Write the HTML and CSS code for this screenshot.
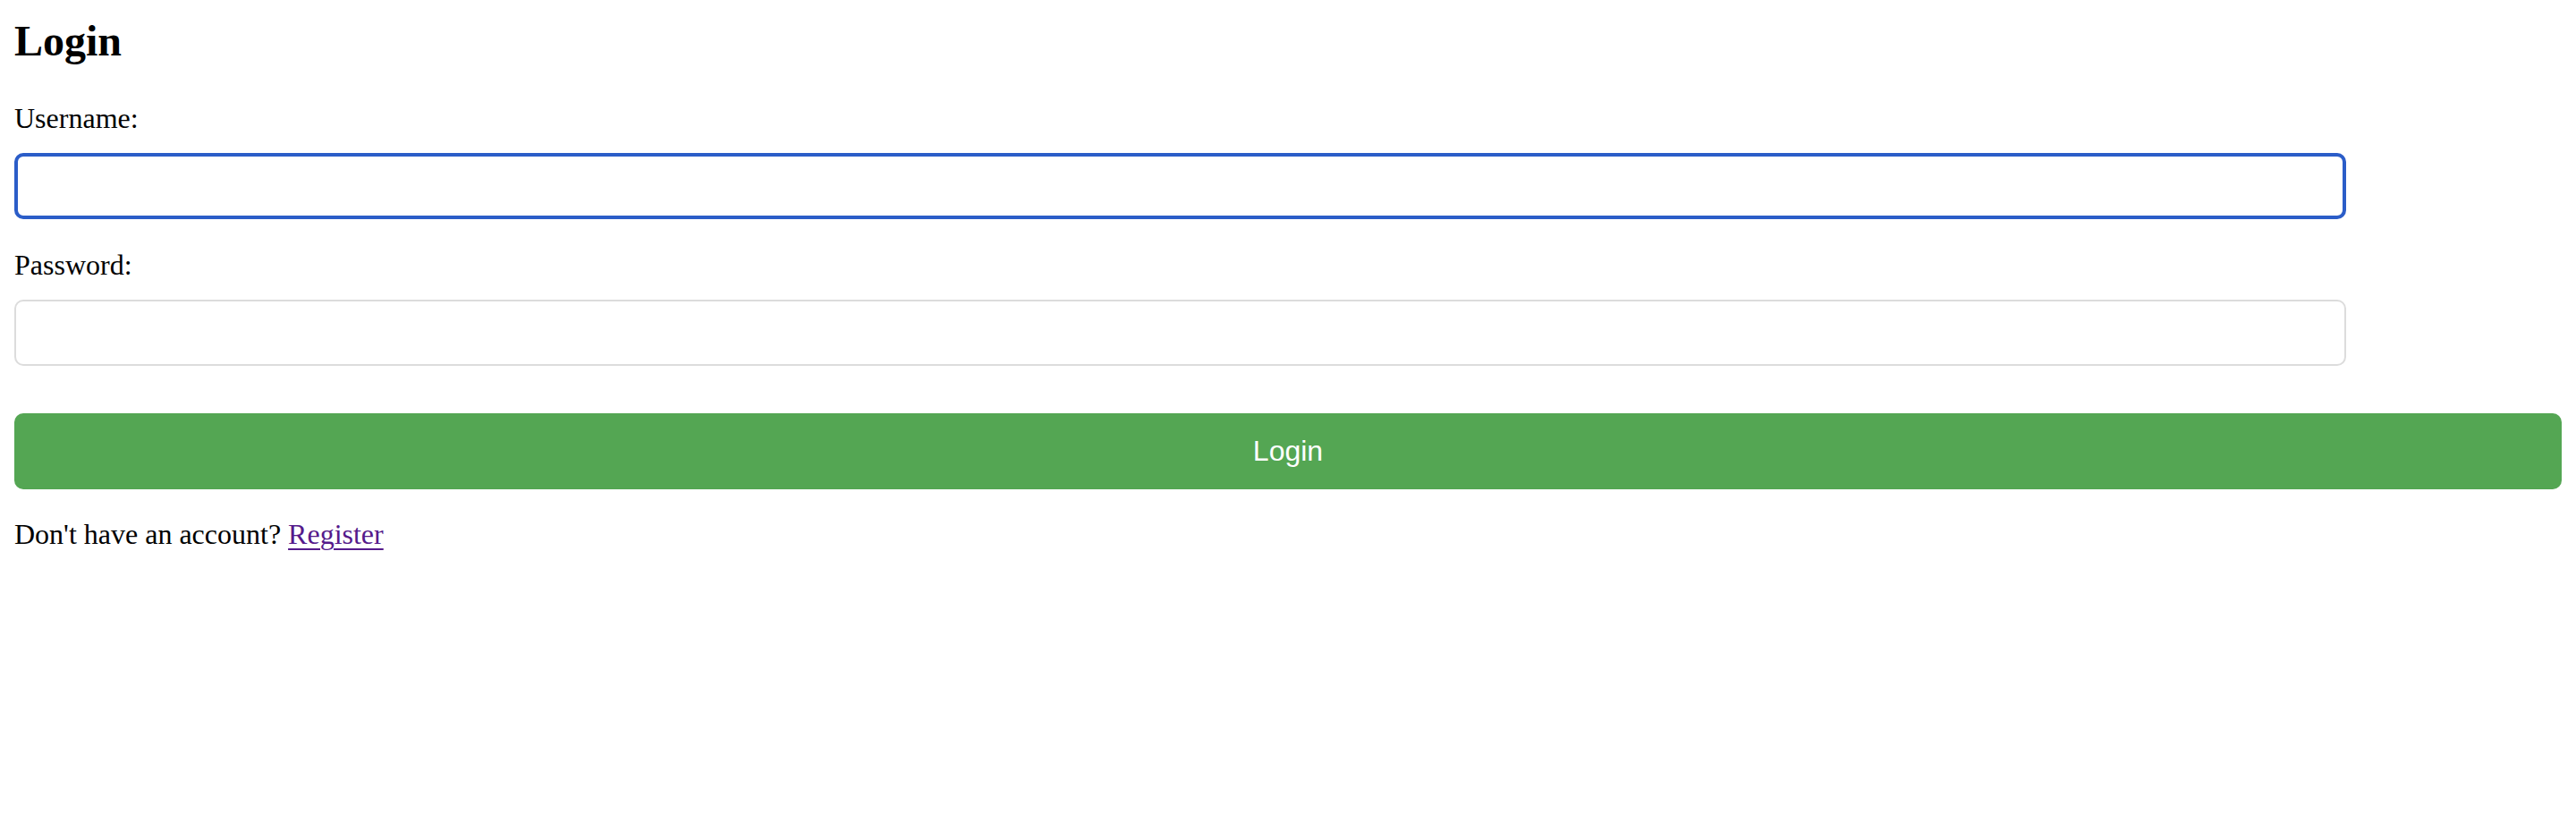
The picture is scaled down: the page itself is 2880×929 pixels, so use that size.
FILE: index.html
```html
<!DOCTYPE html>
<html lang="en">
<head>
<meta charset="utf-8">
<title>Login</title>
<link rel="stylesheet" href="styles.css">
</head>
<body>
<main class="page">
  <h1 class="title">Login</h1>
  <form class="form" onsubmit="return false">
    <label class="label" for="username">Username:</label>
    <input class="input is-focused" id="username" type="text" name="username">
    <label class="label label--gap" for="password">Password:</label>
    <input class="input" id="password" type="password" name="password">
    <button class="button" type="submit">Login</button>
  </form>
  <p class="footer">Don't have an account? <a class="link" href="#register">Register</a></p>
</main>
</body>
</html>
```

FILE: styles.css
```css
html, body {
  margin: 0;
  background: #ffffff;
}

body {
  font-family: "Liberation Serif", "Times New Roman", serif;
  color: #000000;
}

.page {
  padding: 16px;
}

.title {
  margin: 2px 0 0;
  font-size: 48px;
  line-height: 56px;
  font-weight: bold;
}

.form {
  display: flex;
  flex-direction: column;
  align-items: flex-start;
  margin: 40px 0 0;
}

.label {
  font-size: 32px;
  line-height: 36px;
}

.label--gap {
  margin-top: 33px;
}

.input {
  box-sizing: border-box;
  width: calc(90% + 44px);
  height: 74px;
  margin: 21px 0 0;
  padding: 0 20px;
  border: 2px solid #dcdcdc;
  border-radius: 10px;
  background: #ffffff;
  font-family: "Liberation Sans", Arial, sans-serif;
  font-size: 27px;
  outline: none;
}

.input.is-focused {
  border: 4px solid #2b5dc8;
}

.button {
  box-sizing: border-box;
  width: 100%;
  height: 85px;
  margin: 53px 0 0;
  padding: 0;
  border: none;
  border-radius: 10px;
  background: #54a653;
  color: #ffffff;
  font-family: "Liberation Sans", Arial, sans-serif;
  font-size: 32px;
  cursor: pointer;
}

.footer {
  margin: 32px 0 0;
  font-size: 32px;
  line-height: 36px;
}

.link {
  color: #551a8b;
  text-decoration: underline;
  text-decoration-thickness: 2px;
  text-underline-offset: 5px;
}
```
